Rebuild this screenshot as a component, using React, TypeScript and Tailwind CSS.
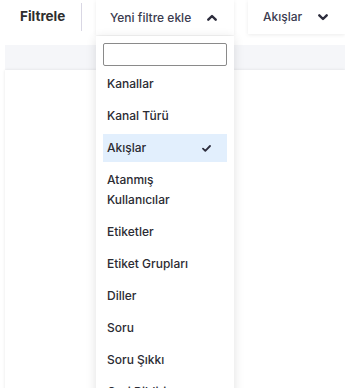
import React from "react";

const items: { label: React.ReactNode; active?: boolean }[] = [
  { label: "Kanallar" },
  { label: "Kanal Türü" },
  { label: "Akışlar", active: true },
  { label: (<>Atanmış<br />Kullanıcılar</>) },
  { label: "Etiketler" },
  { label: "Etiket Grupları" },
  { label: "Diller" },
  { label: "Soru" },
  { label: "Soru Şıkkı" },
  { label: "Geri Bildirim" },
  { label: "Durum" },
];

function ChevronUp() {
  return (
    <svg width="10" height="7" viewBox="0 0 10 7" fill="none">
      <path d="M1.3 5.7 L5 2 L8.7 5.7" stroke="#2d2d3d" strokeWidth="2.4" strokeLinecap="round" strokeLinejoin="round" />
    </svg>
  );
}

function ChevronDown() {
  return (
    <svg width="10" height="7" viewBox="0 0 10 7" fill="none">
      <path d="M1.3 1.3 L5 5 L8.7 1.3" stroke="#2d2d3d" strokeWidth="2.4" strokeLinecap="round" strokeLinejoin="round" />
    </svg>
  );
}

function Check() {
  return (
    <svg width="9" height="7" viewBox="0 0 9 7" fill="none">
      <path d="M1 3.6 L3.3 5.8 L8 1" stroke="#2d2d3d" strokeWidth="1.8" strokeLinecap="round" strokeLinejoin="round" />
    </svg>
  );
}

export default function App() {
  return (
    <div
      className="relative h-[388px] w-[345px] overflow-hidden bg-white text-[#333]"
      style={{ fontFamily: "Inter, 'Noto Sans', sans-serif" }}
    >
      {/* header */}
      <div className="flex h-[45px] items-start pl-[20px]">
        <div className="flex h-[33px] w-[47px] items-center text-[13.5px] font-bold text-[#2e2e2e]">Filtrele</div>
        <div className="ml-[14px] mt-[3px] h-[28px] w-px bg-[#d9d7e4]" />
        <div className="relative ml-[14px] w-[138px] shrink-0">
          <div className="flex h-[35px] items-center bg-white pl-[14px] pr-[17px] text-[12px] font-medium text-[#3b3b4f] shadow-[0_1px_4px_rgba(0,0,0,0.08)]">
            <span>Yeni filtre ekle</span>
            <span className="ml-auto">
              <ChevronUp />
            </span>
          </div>
          {/* dropdown */}
          <div className="absolute left-0 top-[36px] z-10 w-[138px] bg-white px-[7px] pt-[7px] shadow-[0_2px_10px_rgba(0,0,0,0.12)]">
            <div className="h-[23px] w-full rounded-[2px] border border-[#8a8a8a] bg-white" />
            <div className="mt-[4px] flex flex-col gap-[4px]">
              {items.map((it, i) => (
                <div
                  key={i}
                  className={`flex items-center py-[4px] pl-[4px] pr-[16px] text-[12px] font-medium leading-[20px] text-[#2b2b33] ${
                    it.active ? "bg-[#e2effd]" : ""
                  }`}
                >
                  <span>{it.label}</span>
                  {it.active && (
                    <span className="ml-auto">
                      <Check />
                    </span>
                  )}
                </div>
              ))}
            </div>
          </div>
        </div>
        <div className="ml-[14px] flex h-[34px] flex-1 items-center bg-white pl-[15px] text-[12px] font-medium text-[#3b3b4f] shadow-[0_1px_4px_rgba(0,0,0,0.08)]">
          <span>Akışlar</span>
          <span className="ml-[16px]">
            <ChevronDown />
          </span>
        </div>
      </div>
      {/* content area */}
      <div className="ml-[5px] h-[25px] bg-[#f5f6f9]" />
      <div className="ml-[5px] h-[330px] bg-white shadow-[0_0_3px_rgba(0,0,0,0.1)]" />
    </div>
  );
}
